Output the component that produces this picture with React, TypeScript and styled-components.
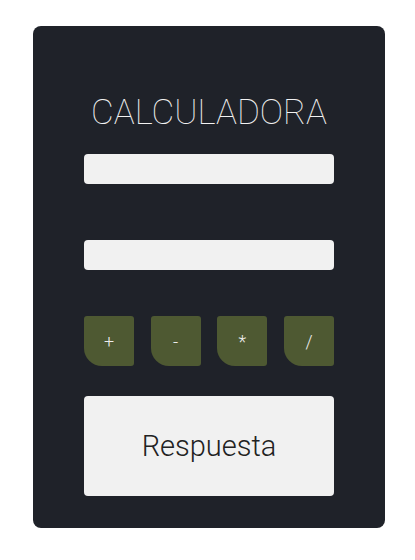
import React from "react";
import styled, { createGlobalStyle } from "styled-components";

const Global = createGlobalStyle`
  html, body { margin: 0; padding: 0; background: #ffffff; }
  body { font-family: Roboto, "Liberation Sans", sans-serif; }
`;

const Page = styled.div`
  padding: 26px 0 0 33px;
`;

const Card = styled.div`
  width: 352px;
  height: 502px;
  box-sizing: border-box;
  background: #1f2229;
  border-radius: 8px;
  display: flex;
  flex-direction: column;
  align-items: center;
  padding-top: 55px;
`;

const Title = styled.h1`
  margin: 0;
  height: 64px;
  font-family: Roboto, "Liberation Sans", sans-serif;
  font-weight: 100;
  font-size: 35px;
  letter-spacing: 0px;
  color: #f2f2f2;
  line-height: 64px;
`;

const Field = styled.input<{ $gap: number }>`
  display: block;
  width: 250px;
  height: 30px;
  box-sizing: border-box;
  border: none;
  border-radius: 4px;
  background: #f1f1f1;
  margin-top: ${(p) => p.$gap}px;
  outline: none;
`;

const Ops = styled.div`
  width: 250px;
  margin-top: 46px;
  display: flex;
  justify-content: space-between;
`;

const OpButton = styled.button`
  width: 50px;
  height: 50px;
  border: none;
  border-radius: 3px 3px 3px 18px;
  background: #4e5932;
  color: #ececec;
  font-family: Roboto, "Liberation Sans", sans-serif;
  font-weight: 300;
  font-size: 18px;
  padding: 0;
`;

const Answer = styled.div`
  width: 250px;
  height: 100px;
  margin-top: 30px;
  border-radius: 4px;
  background: #f1f1f1;
  display: flex;
  align-items: center;
  justify-content: center;
  font-family: Roboto, "Liberation Sans", sans-serif;
  font-weight: 300;
  font-size: 29px;
  color: #222;
`;

export default function App() {
  return (
    <Page>
      <Global />
      <Card>
        <Title>CALCULADORA</Title>
        <Field $gap={9} />
        <Field $gap={56} />
        <Ops>
          <OpButton>+</OpButton>
          <OpButton>-</OpButton>
          <OpButton>*</OpButton>
          <OpButton>/</OpButton>
        </Ops>
        <Answer>Respuesta</Answer>
      </Card>
    </Page>
  );
}
